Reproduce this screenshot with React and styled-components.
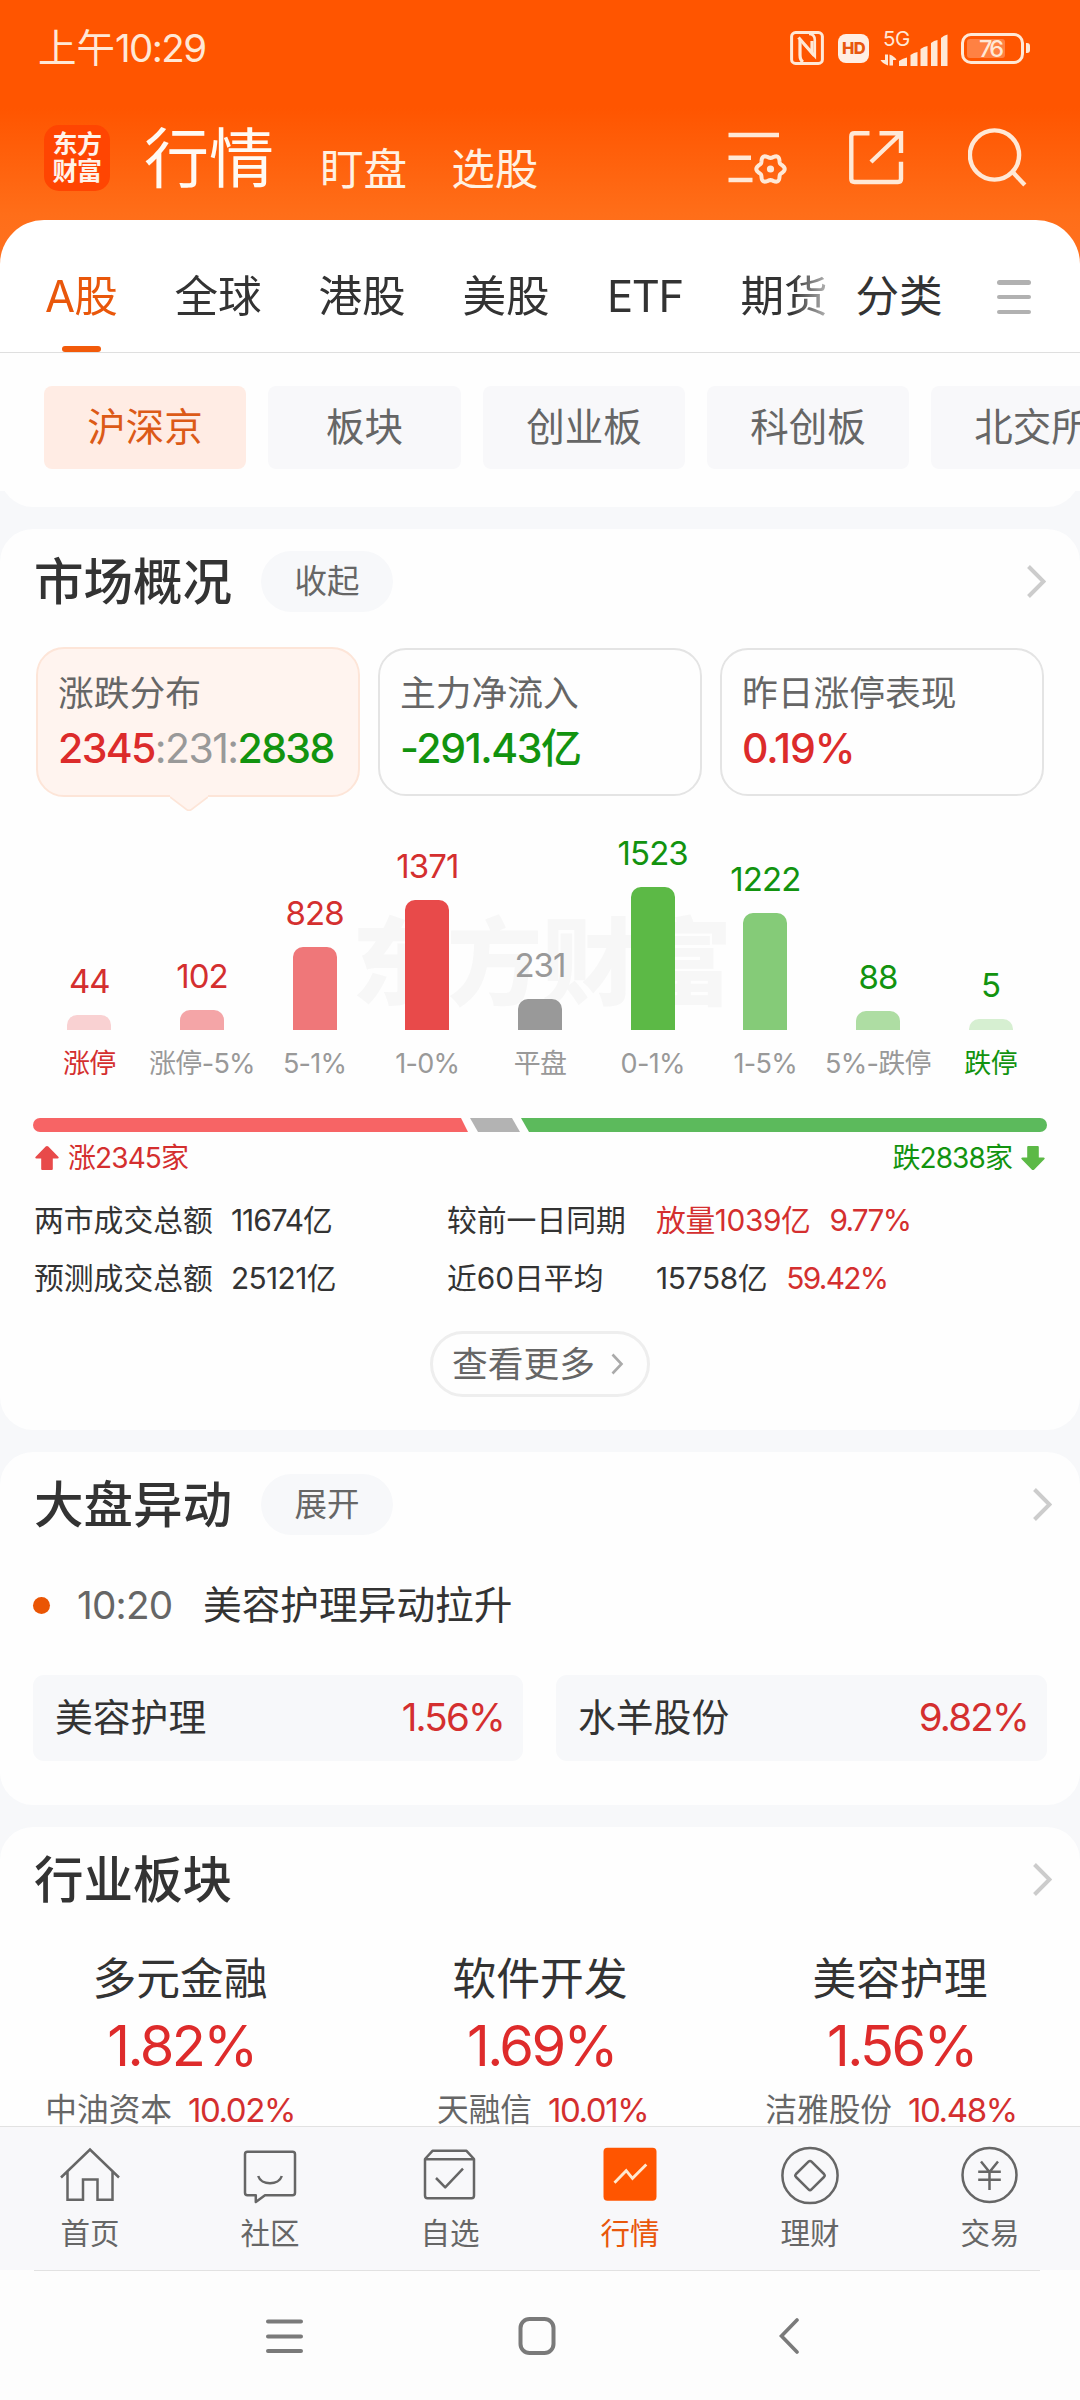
import React from 'react';
import styled, { createGlobalStyle } from 'styled-components';

const RED = '#d42f2f';
const GREEN = '#12930f';
const ORANGE = '#e9570b';
const CREAM = '#ffe8d6';

const GlobalStyle = createGlobalStyle`
  * { box-sizing: border-box; }
  body {
    margin: 0;
    background: #f7f8fa;
    font-family: Inter, "Noto Sans CJK SC", sans-serif;
    color: #333;
  }
`;

const Page = styled.main`
  width: 1080px;
  height: 2400px;
  overflow: hidden;
  display: flex;
  flex-direction: column;
  background: #f7f8fa;
  white-space: nowrap;
`;

/* ---------- header ---------- */

const Top = styled.header`
  background: linear-gradient(180deg, #ff5500 0, #ff5500 108px, #ff6e19 215px, #ff7120 264px);
`;

const StatusBar = styled.div`
  height: 96px;
  padding: 0 50px 0 38px;
  display: flex;
  align-items: center;
  justify-content: space-between;
  color: ${CREAM};
`;

const Clock = styled.time`
  font-size: 38.5px;
  line-height: 50px;
  span { letter-spacing: -1.6px; }
`;

const StatusIcons = styled.div`
  display: flex;
  align-items: center;
`;

const HdBadge = styled.span`
  width: 31px;
  height: 29px;
  margin: 0 11px 0 14px;
  border-radius: 8px;
  background: #ffeee4;
  color: #e8560e;
  font-size: 16.5px;
  font-weight: 800;
  line-height: 29px;
  text-align: center;
  letter-spacing: -0.6px;
`;

const Signal = styled.div`
  display: grid;
  grid-template-columns: 68px;
  grid-template-rows: 17px 20px;
  width: 68px;
  span {
    font-size: 20.5px;
    line-height: 17px;
    padding-left: 3px;
    letter-spacing: -0.5px;
  }
  svg { display: block; margin-top: -17px; }
`;

const Battery = styled.div`
  width: 63px;
  height: 31px;
  margin-left: 13px;
  padding: 3px;
  border: 3px solid ${CREAM};
  border-radius: 10px;
`;

const BatteryLevel = styled.div`
  width: ${(p) => p.$level}%;
  height: 19px;
  border-radius: 3px;
  background: #ff8143;
  color: ${CREAM};
  font-size: 23.5px;
  line-height: 19px;
  font-weight: 500;
  letter-spacing: -2.8px;
  padding-left: 12px;
`;

const BatteryNub = styled.div`
  width: 4px;
  height: 10px;
  margin-left: 2px;
  border-radius: 0 3px 3px 0;
  background: ${CREAM};
`;

const TitleBar = styled.div`
  height: 124px;
  padding: 0 52px 0 44px;
  display: flex;
  align-items: center;
`;

const Logo = styled.div`
  width: 66px;
  height: 66px;
  border-radius: 15px;
  background: #ff4502;
  color: #fff3ea;
  display: flex;
  flex-direction: column;
  align-items: center;
  justify-content: center;
  font-size: 25px;
  line-height: 27.5px;
  font-weight: 700;
  letter-spacing: -0.6px;
`;

const ScreenTitle = styled.h1`
  margin: 0 0 0 34px;
  padding-top: 2px;
  font-size: 65px;
  line-height: 80px;
  font-weight: 400;
  color: #fffaf3;
`;

const ScreenLink = styled.span`
  margin-left: ${(p) => p.$gap}px;
  padding-top: 24px;
  font-size: 43.6px;
  line-height: 60px;
  color: #fff1e2;
`;

const TitleActions = styled.div`
  margin-left: auto;
  display: flex;
  gap: 60px;
  svg { display: block; }
`;

const TabBar = styled.nav`
  height: 133px;
  border-radius: 44px 44px 0 0;
  border-bottom: 1px solid #dfdfdf;
  background: #fff;
  display: flex;
  align-items: stretch;
`;

const TabScroller = styled.div`
  width: 828px;
  padding-left: 44px;
  overflow: hidden;
  display: flex;
  gap: 56px;
  mask-image: linear-gradient(90deg, #000 792px, rgba(0, 0, 0, 0.35) 828px);
`;

const Tab = styled.div`
  flex: none;
  width: ${(p) => p.$width || 88}px;
  padding-top: 47px;
  display: flex;
  flex-direction: column;
  align-items: center;
  justify-content: space-between;
  font-size: 43.6px;
  line-height: 60px;
  letter-spacing: ${(p) => p.$spacing || 0}px;
  color: ${(p) => (p.$active ? ORANGE : '#333')};
  &::after {
    content: '';
    width: 39px;
    height: 6px;
    border-radius: 3px;
    background: ${(p) => (p.$active ? '#f25a0a' : 'transparent')};
  }
`;

const PinnedTab = styled(Tab)`
  margin-left: 27px;
`;

const MenuLines = styled.div`
  width: 34px;
  margin: 60px 0 0 54px;
  height: 34px;
  display: flex;
  flex-direction: column;
  justify-content: space-between;
  i {
    height: 4.5px;
    border-radius: 3px;
    background: #b1b1b1;
  }
`;

const ChipBacking = styled.div`
  background: linear-gradient(180deg, #fefefe 138px, #f7f8fa 138px);
`;

const ChipRow = styled.div`
  height: 154px;
  padding: 33px 0 0 44px;
  border-radius: 0 0 33px 33px;
  background: #fefefe;
  overflow: hidden;
  display: flex;
  gap: 22px;
`;

const Chip = styled.div`
  flex: none;
  width: ${(p) => p.$width}px;
  height: 83px;
  border-radius: 8px;
  background: ${(p) => (p.$active ? '#ffece4' : '#f8f8fa')};
  color: ${(p) => (p.$active ? '#dc5a17' : '#666')};
  font-size: 38.5px;
  line-height: 82px;
  text-align: center;
`;

/* ---------- sections ---------- */

const Section = styled.section`
  flex: none;
  height: ${(p) => p.$height}px;
  margin-top: 22px;
  border-radius: ${(p) => (p.$cut ? '33px 33px 0 0' : '33px')};
  background: #fefefe;
  overflow: hidden;
`;

const SectionHead = styled.div`
  height: 105px;
  padding: 0 ${(p) => p.$right || 28}px 0 34px;
  display: flex;
  align-items: center;
`;

const SectionTitle = styled.h2`
  margin: 0;
  width: 227px;
  font-size: 49.5px;
  line-height: 70px;
  font-weight: 500;
  color: #333;
`;

const Pill = styled.span`
  width: 132px;
  height: 61px;
  border-radius: 31px;
  background: #f7f8fa;
  color: #666;
  font-size: 32.5px;
  line-height: 62px;
  text-align: center;
`;

const HeadChevron = styled.span`
  margin-left: auto;
  svg { display: block; }
`;

const StatCards = styled.div`
  height: 150px;
  margin: 13px 36px 0;
  display: grid;
  grid-template-columns: repeat(3, 324px);
  gap: 18px;
`;

const StatCard = styled.div`
  position: relative;
  margin: ${(p) => (p.$active ? 0 : '1px 0')};
  padding: ${(p) => (p.$active ? 21 : 20)}px 0 0 20px;
  border: 2px solid ${(p) => (p.$active ? '#fde5d8' : '#e4e4e4')};
  border-radius: 28px;
  background: ${(p) => (p.$active ? '#fff4ef' : '#fefefe')};
`;

const StatLabel = styled.div`
  font-size: 35.75px;
  line-height: 46px;
  color: #666;
`;

const StatValue = styled.div`
  margin-top: 2px;
  font-size: 41px;
  line-height: 60px;
  font-weight: 550;
  letter-spacing: ${(p) => p.$spacing || 0}px;
  color: ${(p) => p.$color};
`;

const Part = styled.span`
  color: ${(p) => p.$color};
  font-weight: ${(p) => p.$weight || 550};
  letter-spacing: ${(p) => (p.$spacing ? `${p.$spacing}px` : 'inherit')};
`;

const Pointer = styled.svg`
  position: absolute;
  left: 132px;
  top: 146px;
`;

const Chart = styled.div`
  position: relative;
  height: 287px;
  margin: 0 33px;
`;

const Watermark = styled.div`
  position: absolute;
  left: 319px;
  top: 112px;
  font-size: 95px;
  line-height: 110px;
  font-weight: 900;
  color: #f7f7f7;
`;

const Columns = styled.div`
  position: relative;
  height: 287px;
  display: grid;
  grid-template-columns: repeat(9, 1fr);
`;

const Column = styled.div`
  display: flex;
  flex-direction: column;
  align-items: center;
  justify-content: flex-end;
`;

const ColumnValue = styled.span`
  margin-bottom: 16px;
  font-size: 33px;
  line-height: 36px;
  letter-spacing: -0.9px;
  color: ${(p) => p.$color};
`;

const ColumnBar = styled.div`
  width: 44px;
  border-radius: 10px 10px 0 0;
  background: ${(p) => p.$color};
`;

const ColumnLabel = styled.span`
  margin-top: 14px;
  font-size: 27px;
  line-height: 40px;
  letter-spacing: -0.7px;
  color: ${(p) => p.$color};
`;

const RatioBar = styled.div`
  height: 14px;
  margin: 34px 33px 0;
  display: flex;
`;

const RatioPart = styled.div`
  background: ${(p) => p.$color};
  clip-path: ${(p) => p.$clip};
  border-radius: ${(p) => p.$radius || 0};
`;

const RatioLegend = styled.div`
  height: 40px;
  margin: 6px 34px 0;
  display: flex;
  justify-content: space-between;
  font-size: 28px;
  line-height: 40px;
`;

const LegendItem = styled.span`
  display: flex;
  align-items: center;
  gap: 8px;
  letter-spacing: -0.9px;
  color: ${(p) => p.$color};
`;

const Turnover = styled.div`
  margin: 13px 34px 0;
  display: grid;
  grid-template-columns: 197px 216px 209px auto;
  grid-auto-rows: 58px;
  align-items: center;
  font-size: 29.8px;
  line-height: 40px;
`;

const Figures = styled.span`
  display: flex;
  gap: 19px;
  letter-spacing: ${(p) => p.$spacing}px;
`;

const MoreButton = styled.button`
  width: 220px;
  height: 66px;
  margin: 24px auto 0;
  padding: 0 0 0 19px;
  border: 3px solid #eeeeee;
  border-radius: 33px;
  background: transparent;
  color: #666;
  font-family: inherit;
  font-size: 35.75px;
  line-height: 58px;
  display: flex;
  align-items: center;
  gap: 16px;
`;

const NewsRow = styled.div`
  height: 60px;
  margin: 18px 33px 0;
  display: flex;
  align-items: center;
  font-size: 38.7px;
  line-height: 60px;
`;

const Dot = styled.i`
  width: 17px;
  height: 17px;
  border-radius: 50%;
  background: #ea5504;
`;

const NewsTime = styled.time`
  width: 126px;
  margin-left: 27px;
  color: #666;
  letter-spacing: -0.8px;
`;

const MoverGrid = styled.div`
  margin: 40px 33px 0;
  display: grid;
  grid-template-columns: 490px 491px;
  gap: 33px;
`;

const Mover = styled.div`
  height: 86px;
  padding: 0 19px 0 22px;
  border-radius: 11px;
  background: #f7f8fa;
  display: flex;
  justify-content: space-between;
  font-size: 37.8px;
  line-height: 85px;
  b {
    font-weight: 400;
    font-size: 38.5px;
    letter-spacing: -1.8px;
    color: ${RED};
  }
`;

const SectorGrid = styled.div`
  margin-top: 18px;
  display: grid;
  grid-template-columns: repeat(3, 360px);
  text-align: center;
`;

const SectorName = styled.div`
  font-size: 43.8px;
  line-height: 60px;
`;

const SectorChange = styled.div`
  margin-top: 4px;
  padding-left: 3px;
  font-size: 56px;
  line-height: 64px;
  letter-spacing: -2.6px;
  color: #de2b2b;
`;

const SectorLeader = styled.div`
  margin-top: 10px;
  display: grid;
  grid-template-columns: 1fr 1fr;
  gap: 16px;
  font-size: 31.7px;
  line-height: 44px;
  color: #666;
  span { text-align: right; }
  b {
    font-weight: 400;
    text-align: left;
    font-size: 33px;
    letter-spacing: -1.4px;
    color: ${RED};
  }
`;

/* ---------- bottom bars ---------- */

const NavBar = styled.nav`
  flex: none;
  height: 144px;
  border-top: 1px solid #e2e2e2;
  background: #f8f8fa;
  display: grid;
  grid-template-columns: repeat(6, 1fr);
`;

const NavItem = styled.div`
  padding-top: 18px;
  display: flex;
  flex-direction: column;
  align-items: center;
  gap: 10px;
  font-size: 29.5px;
  line-height: 36px;
  color: ${(p) => (p.$active ? ORANGE : '#666')};
  svg { display: block; }
`;

const SystemBar = styled.div`
  flex: none;
  height: 130px;
  padding: 0 40px 0 34px;
  background: #fdfdfd;
`;

const SystemKeys = styled.div`
  height: 130px;
  padding-left: 232px;
  border-top: 1px solid #e2e2e2;
  display: flex;
  align-items: center;
  svg { display: block; }
  svg:nth-child(2) { margin: 0 223px 0 214.5px; }
`;

/* ---------- drawings ---------- */

const gearPath = (() => {
  const pts = [];
  for (let i = 0; i < 72; i += 1) {
    const a = (i / 72) * Math.PI * 2;
    const r = 12.6 + 1.6 * Math.cos(6 * a);
    pts.push(`${(42.5 + r * Math.cos(a)).toFixed(2)} ${(41 + r * Math.sin(a)).toFixed(2)}`);
  }
  return `M${pts.join('L')}Z`;
})();

const ListSettingsIcon = () => (
  <svg width="60" height="60" viewBox="0 0 60 60" fill="none" stroke={CREAM} strokeWidth="4.6">
    <path d="M0.500 7H51M0.500 29.700H23M0.500 52H24.500" />
    <path d={gearPath} strokeWidth="4" strokeLinejoin="round" />
    <circle cx="42.500" cy="41" r="3.600" fill={CREAM} stroke="none" />
  </svg>
);

const ShareIcon = () => (
  <svg width="60" height="60" viewBox="0 0 60 60" fill="none" stroke={CREAM} strokeWidth="4.4">
    <path d="M21.500 5.300H6.500Q3.300 5.300 3.300 8.500V51Q3.300 54 6.500 54H50Q53 54 53 51V33.800" />
    <path d="M31.500 5.300H53V25M52.400 6L23 34" />
  </svg>
);

const SearchIcon = () => (
  <svg width="60" height="60" viewBox="0 0 60 60" fill="none" stroke={CREAM} strokeWidth="4.4">
    <circle cx="26.500" cy="27" r="24.600" />
    <path d="M44.200 43.600L56.800 57" />
  </svg>
);

const NfcIcon = () => (
  <svg width="34" height="34" viewBox="0 0 34 34" fill="none" stroke={CREAM} strokeWidth="3">
    <rect x="1.600" y="1.600" width="30.800" height="30.800" rx="4" />
    <path d="M8.500 6.500L22 22V10" strokeWidth="3.200" />
    <path d="M10 9V24Q10 29 13 31" strokeWidth="3.200" />
    <path d="M19 3Q24.800 3 24.800 9V25L14.500 13.500" strokeWidth="2.600" />
  </svg>
);

const SignalBars = () => (
  <svg width="68" height="36" viewBox="0 0 68 36" fill={CREAM}>
    <path d="M5 24.500H8V35.500Q2 33 0.500 30H5ZM9.500 24.500Q15 26.500 16.500 30H13V35.500H9.500Z" />
    <path d="M19 36V31Q23 28 27 27.500V36ZM30.500 36V25Q34 22.500 37.500 22V36ZM40.500 36V19Q44 16.500 47.500 16V36ZM51 36V13Q54 10.500 57.500 10V36ZM61 36V8Q64 5 67.500 4.500V36Z" />
  </svg>
);

const Chevron = ({ w = 19, h = 33, color = '#cccccc', stroke = 4 }) => (
  <svg width={w} height={h} viewBox={`0 0 ${w} ${h}`} fill="none" stroke={color} strokeWidth={stroke}>
    <path d={`M1.500 1.500L${w - 2.5} ${h / 2}L1.500 ${h - 1.5}`} />
  </svg>
);

const UpArrow = () => (
  <svg width="26" height="26" viewBox="0 0 26 26" fill="#e84a4a">
    <path d="M13 1Q13.700 1 14.300 1.600L24.300 11.800Q25.500 13.500 23.500 13.500H18.800V24Q18.800 25 17.800 25H8.200Q7.200 25 7.200 24V13.500H2.500Q0.500 13.500 1.700 11.800L11.700 1.600Q12.300 1 13 1Z" />
  </svg>
);

const DownArrow = () => (
  <svg width="26" height="26" viewBox="0 0 26 26" fill="#5cb946">
    <path d="M13 25Q12.300 25 11.700 24.400L1.700 14.200Q0.500 12.500 2.500 12.500H7.200V2Q7.200 1 8.200 1H17.800Q18.800 1 18.800 2V12.500H23.500Q25.500 12.500 24.300 14.200L14.300 24.400Q13.700 25 13 25Z" />
  </svg>
);

const NavSvg = ({ children }) => (
  <svg width="60" height="60" viewBox="0 0 60 60" fill="none" stroke="#666" strokeWidth="2.5" strokeLinejoin="round">
    {children}
  </svg>
);

const navItems = [
  {
    label: '首页',
    icon: <path d="M1 32.500L30 4.500L59 32.500M7.500 26V54.800H23V34.500H37.500V54.800H52.500V26" strokeLinejoin="miter" />,
  },
  {
    label: '社区',
    icon: (
      <>
        <path d="M7.500 6.800H52.500Q55 6.800 55 9.300V47.800Q55 50.300 52.500 50.300H25L15.800 57V50.300H7.500Q5 50.300 5 47.800V9.300Q5 6.800 7.500 6.800Z" />
        <path d="M18.200 31C21 40.500 39 40.500 41.800 31" />
      </>
    ),
  },
  {
    label: '自选',
    icon: (
      <>
        <path d="M5 14L12.500 5.800H46.500L54 14V50.500Q54 53.300 51.500 53.300H7.500Q5 53.300 5 50.500ZM5 14.300H54" />
        <path d="M16 33L25.200 42.300L43 23.700" />
      </>
    ),
  },
  {
    label: '行情',
    active: true,
    icon: (
      <>
        <rect x="3.500" y="2.700" width="53" height="53" rx="4" fill="#ff5500" stroke="none" />
        <path d="M14.500 37.700L26.200 25.700L32.500 33.300L46.300 19.400" stroke="#ffe8d0" strokeWidth="2.800" strokeLinejoin="miter" />
      </>
    ),
  },
  {
    label: '理财',
    icon: (
      <>
        <circle cx="30" cy="30.500" r="27.600" />
        <path d="M28.500 16.700Q30 15.200 31.500 16.700L44 29Q45.400 30.500 44 32L31.500 44.300Q30 45.800 28.500 44.300L16 32Q14.600 30.500 16 29Z" />
      </>
    ),
  },
  {
    label: '交易',
    icon: (
      <>
        <circle cx="29.500" cy="30" r="27" />
        <path d="M21 16.500L29.500 27L38 16.500M29.500 27V45M18.200 26.800H40.800M18.200 34.800H40.800" strokeLinejoin="miter" />
      </>
    ),
  },
];

const bars = [
  { value: 44, label: '涨停', h: 15, color: '#f9d1d2', text: RED, caption: RED },
  { value: 102, label: '涨停-5%', h: 20, color: '#f4a5a7', text: RED },
  { value: 828, label: '5-1%', h: 83, color: '#ef7779', text: RED },
  { value: 1371, label: '1-0%', h: 130, color: '#e84a4a', text: RED },
  { value: 231, label: '平盘', h: 31, color: '#999999', text: '#999' },
  { value: 1523, label: '0-1%', h: 143, color: '#5cb946', text: GREEN },
  { value: 1222, label: '1-5%', h: 117, color: '#85cb78', text: GREEN },
  { value: 88, label: '5%-跌停', h: 19, color: '#aedda3', text: GREEN },
  { value: 5, label: '跌停', h: 11, color: '#d6efd1', text: GREEN, caption: GREEN },
];

const sectors = [
  { name: '多元金融', change: '1.82%', stock: '中油资本', gain: '10.02%' },
  { name: '软件开发', change: '1.69%', stock: '天融信', gain: '10.01%' },
  { name: '美容护理', change: '1.56%', stock: '洁雅股份', gain: '10.48%' },
];

export default function App() {
  return (
    <>
      <GlobalStyle />
      <Page>
        <Top>
          <StatusBar>
            <Clock>上午<span>10:29</span></Clock>
            <StatusIcons>
              <NfcIcon />
              <HdBadge>HD</HdBadge>
              <Signal>
                <span>5G</span>
                <SignalBars />
              </Signal>
              <Battery><BatteryLevel $level={74}>76</BatteryLevel></Battery>
              <BatteryNub />
            </StatusIcons>
          </StatusBar>
          <TitleBar>
            <Logo><span>东方</span><span>财富</span></Logo>
            <ScreenTitle>行情</ScreenTitle>
            <ScreenLink $gap={46}>盯盘</ScreenLink>
            <ScreenLink $gap={44}>选股</ScreenLink>
            <TitleActions>
              <ListSettingsIcon />
              <ShareIcon />
              <SearchIcon />
            </TitleActions>
          </TitleBar>
          <TabBar>
            <TabScroller>
              <Tab $active $width={74} $spacing={-0.8}>A股</Tab>
              <Tab>全球</Tab>
              <Tab>港股</Tab>
              <Tab>美股</Tab>
              <Tab $width={78} $spacing={-1.4}>ETF</Tab>
              <Tab>期货</Tab>
            </TabScroller>
            <PinnedTab>分类</PinnedTab>
            <MenuLines><i /><i /><i /></MenuLines>
          </TabBar>
        </Top>

        <ChipBacking>
          <ChipRow>
            <Chip $active $width={202}>沪深京</Chip>
            <Chip $width={193}>板块</Chip>
            <Chip $width={202}>创业板</Chip>
            <Chip $width={202}>科创板</Chip>
            <Chip $width={202}>北交所</Chip>
          </ChipRow>
        </ChipBacking>

        <Section $height={901}>
          <SectionHead $right={34}>
            <SectionTitle>市场概况</SectionTitle>
            <Pill>收起</Pill>
            <HeadChevron><Chevron /></HeadChevron>
          </SectionHead>
          <StatCards>
            <StatCard $active>
              <StatLabel>涨跌分布</StatLabel>
              <StatValue $spacing={-1.6}>
                <Part $color="#dc2b2b">2345</Part>
                <Part $color="#999" $weight={400}>:231:</Part>
                <Part $color={GREEN}>2838</Part>
              </StatValue>
              <Pointer width="38" height="18" viewBox="0 0 38 18">
                <path d="M0 0H38V2L21.500 14.500Q19 16 16.500 14.500L0 2Z" fill="#fff4ef" />
                <path d="M0 2L16.500 14.500Q19 16 21.500 14.500L38 2" fill="none" stroke="#fde5d8" strokeWidth="1.600" />
              </Pointer>
            </StatCard>
            <StatCard>
              <StatLabel>主力净流入</StatLabel>
              <StatValue $color={GREEN} $spacing={-1.4}>-291.43亿</StatValue>
            </StatCard>
            <StatCard>
              <StatLabel>昨日涨停表现</StatLabel>
              <StatValue $color="#dc2b2b" $spacing={-1.1}>0.19%</StatValue>
            </StatCard>
          </StatCards>
          <Chart>
            <Watermark>东方财富</Watermark>
            <Columns>
              {bars.map((b) => (
                <Column key={b.label}>
                  <ColumnValue $color={b.text}>{b.value}</ColumnValue>
                  <ColumnBar $color={b.color} style={{ height: b.h }} />
                  <ColumnLabel $color={b.caption || '#999'}>{b.label}</ColumnLabel>
                </Column>
              ))}
            </Columns>
          </Chart>
          <RatioBar>
            <RatioPart
              $color="#f76465"
              $radius="7px 0 0 7px"
              $clip="polygon(0 0, calc(100% - 7px) 0, 100% 100%, 0 100%)"
              style={{ width: 435 }}
            />
            <RatioPart
              $color="#b3b3b3"
              $clip="polygon(0 0, calc(100% - 8px) 0, 100% 100%, 8px 100%)"
              style={{ width: 50, marginLeft: 2 }}
            />
            <RatioPart
              $color="#5cba5c"
              $radius="0 7px 7px 0"
              $clip="polygon(0 0, 100% 0, 100% 100%, 8px 100%)"
              style={{ width: 526, marginLeft: 1 }}
            />
          </RatioBar>
          <RatioLegend>
            <LegendItem $color={RED}><UpArrow />涨2345家</LegendItem>
            <LegendItem $color={GREEN}>跌2838家<DownArrow /></LegendItem>
          </RatioLegend>
          <Turnover>
            <span>两市成交总额</span>
            <Figures $spacing={-1}>11674亿</Figures>
            <span>较前一日同期</span>
            <Figures $spacing={-0.4}>
              <Part $color={RED} $weight={400}>放量1039亿</Part>
              <Part $color={RED} $weight={400} $spacing={-1.7}>9.77%</Part>
            </Figures>
            <span>预测成交总额</span>
            <Figures $spacing={-0.6}>25121亿</Figures>
            <span>近60日平均</span>
            <Figures $spacing={-0.3}>
              15758亿
              <Part $color={RED} $weight={400} $spacing={-1.7}>59.42%</Part>
            </Figures>
          </Turnover>
          <MoreButton>
            查看更多
            <Chevron w={13} h={22} color="#aaaaaa" stroke={2.6} />
          </MoreButton>
        </Section>

        <Section $height={353}>
          <SectionHead>
            <SectionTitle>大盘异动</SectionTitle>
            <Pill>展开</Pill>
            <HeadChevron><Chevron /></HeadChevron>
          </SectionHead>
          <NewsRow>
            <Dot />
            <NewsTime>10:20</NewsTime>
            <span>美容护理异动拉升</span>
          </NewsRow>
          <MoverGrid>
            <Mover>美容护理<b>1.56%</b></Mover>
            <Mover>水羊股份<b>9.82%</b></Mover>
          </MoverGrid>
        </Section>

        <Section $height={299} $cut>
          <SectionHead>
            <SectionTitle>行业板块</SectionTitle>
            <HeadChevron><Chevron /></HeadChevron>
          </SectionHead>
          <SectorGrid>
            {sectors.map((s) => (
              <div key={s.name}>
                <SectorName>{s.name}</SectorName>
                <SectorChange>{s.change}</SectorChange>
                <SectorLeader><span>{s.stock}</span><b>{s.gain}</b></SectorLeader>
              </div>
            ))}
          </SectorGrid>
        </Section>

        <NavBar>
          {navItems.map((n) => (
            <NavItem key={n.label} $active={n.active}>
              <NavSvg>{n.icon}</NavSvg>
              {n.label}
            </NavItem>
          ))}
        </NavBar>
        <SystemBar>
          <SystemKeys>
            <svg width="37" height="36" viewBox="0 0 37 36" stroke="#7a7a7a" strokeWidth="4" strokeLinecap="round">
              <path d="M2 3.500H35M2 18.500H35M2 33H35" />
            </svg>
            <svg width="38" height="38" viewBox="0 0 38 38" fill="none" stroke="#7a7a7a" strokeWidth="4">
              <rect x="2.500" y="2" width="33" height="34" rx="9" />
            </svg>
            <svg width="20" height="36" viewBox="0 0 20 36" fill="none" stroke="#7a7a7a" strokeWidth="3.600" strokeLinecap="round">
              <path d="M18 2L2.500 18L18 34" />
            </svg>
          </SystemKeys>
        </SystemBar>
      </Page>
    </>
  );
}
